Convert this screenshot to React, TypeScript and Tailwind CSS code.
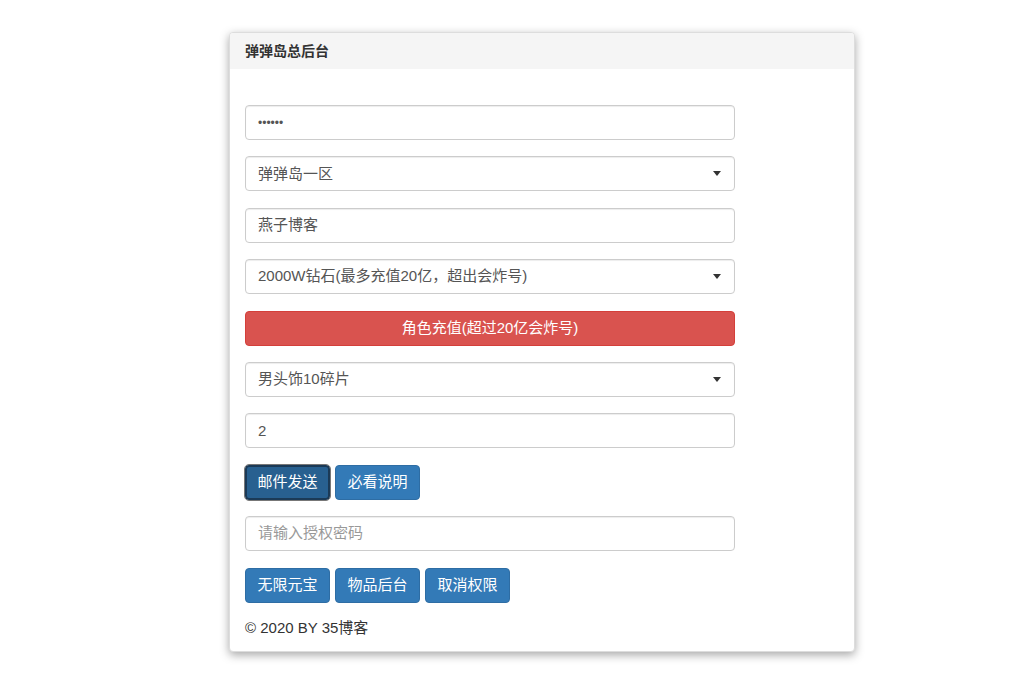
import React from 'react';

const font = { fontFamily: '"Helvetica Neue", Arial, "Liberation Sans", "Noto Sans CJK SC", sans-serif' };

const fieldBase =
  'flex items-center w-[490px] h-[35px] px-[12px] bg-white border border-[#ccc] rounded-[4px] text-[15px] text-[#555] shadow-[inset_0_1px_1px_rgba(0,0,0,0.075)]';

const Field: React.FC<{ value?: string; placeholder?: string; select?: boolean }> = ({ value, placeholder, select }) => (
  <div className={fieldBase}>
    {value ? <span className="flex-1">{value}</span> : <span className="flex-1 text-[#999]">{placeholder}</span>}
    {select && <span className="w-0 h-0 mr-[1px] border-l-[4px] border-r-[4px] border-t-[5px] border-l-transparent border-r-transparent border-t-[#333]" />}
  </div>
);

const Btn: React.FC<{ label: string; active?: boolean }> = ({ label, active }) => (
  <button
    className={
      active
        ? 'h-[35px] w-[85px] rounded-[4px] bg-[#286090] text-white text-[15px] border-2 border-[#1b3a57] outline outline-1 outline-[#777]'
        : 'h-[35px] w-[85px] rounded-[4px] bg-[#337ab7] text-white text-[15px] border border-[#2e6da4]'
    }
  >
    {label}
  </button>
);

export default function App() {
  return (
    <div className="w-[1024px] h-[683px] bg-white pt-[32px] pl-[229px]" style={font}>
      <div className="w-[626px] h-[620px] bg-white rounded-[4px] border border-[#ddd] shadow-[0_3px_10px_rgba(0,0,0,0.35)] overflow-hidden">
        <div className="h-[36px] bg-[#f5f5f5] px-[15px] flex items-center text-[14px] font-bold text-[#333]">弹弹岛总后台</div>
        <div className="px-[15px] pt-[36px] flex flex-col gap-[16.4px]">
          <div className={fieldBase}>
            <span className="text-[12px] tracking-[0px] text-[#555]">••••••</span>
          </div>
          <Field value="弹弹岛一区" select />
          <Field value="燕子博客" />
          <Field value="2000W钻石(最多充值20亿，超出会炸号)" select />
          <button className="w-[490px] h-[35px] rounded-[4px] bg-[#d9534f] border border-[#d43f3a] text-white text-[15px]">
            角色充值(超过20亿会炸号)
          </button>
          <Field value="男头饰10碎片" select />
          <Field value="2" />
          <div className="flex gap-[5px]">
            <Btn label="邮件发送" active />
            <Btn label="必看说明" />
          </div>
          <Field placeholder="请输入授权密码" />
          <div className="flex gap-[5px]">
            <Btn label="无限元宝" />
            <Btn label="物品后台" />
            <Btn label="取消权限" />
          </div>
          <div className="text-[15px] text-[#333] -mt-[2px]">© 2020 BY 35博客</div>
        </div>
      </div>
    </div>
  );
}
